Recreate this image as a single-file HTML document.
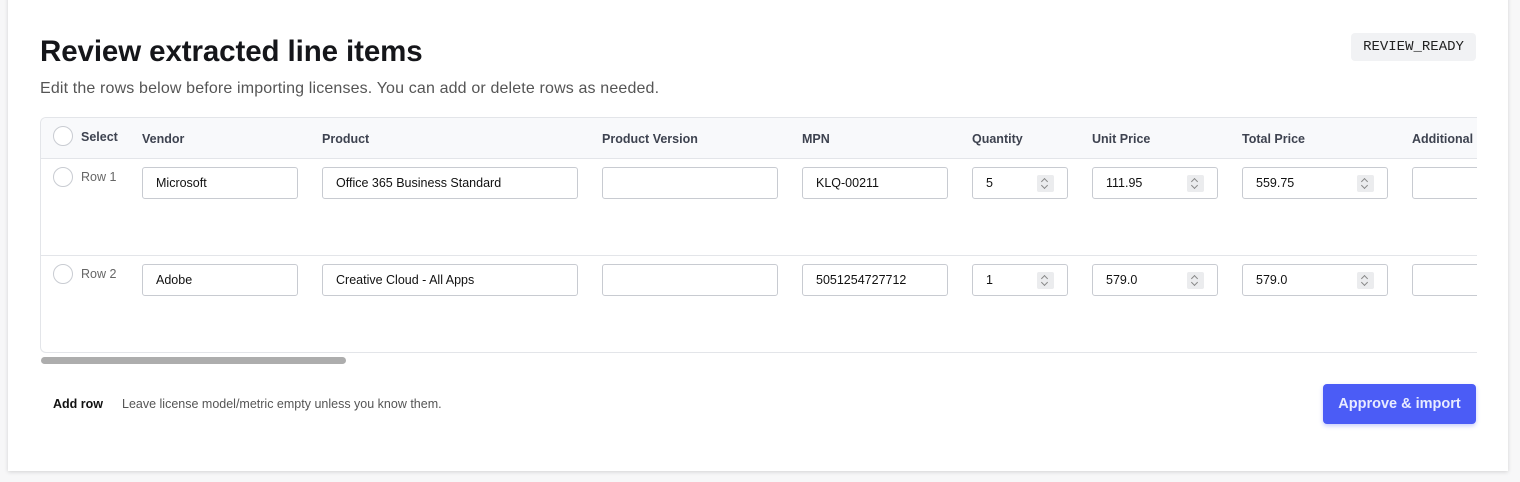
<!DOCTYPE html>
<html><head><meta charset="utf-8"><style>
*{box-sizing:border-box;margin:0;padding:0}
body{width:1520px;height:482px;background:#f7f7f8;font-family:"Liberation Sans",sans-serif;position:relative;overflow:hidden;color:#111}
.card{position:absolute;left:8px;top:-4px;width:1500px;height:475px;background:#fff;box-shadow:0 1px 4px rgba(0,0,0,.15)}
.a{position:absolute}
h1{position:absolute;left:40px;top:35px;font-size:29.5px;font-weight:700;color:#15161a;letter-spacing:-.1px}
.sub{left:40px;top:80px;font-size:16px;color:#555;letter-spacing:.15px}
.badge{left:1351px;top:33px;width:125px;height:28px;background:#f1f2f4;border-radius:4px;font-family:"Liberation Mono",monospace;font-size:14px;color:#222;text-align:center;line-height:28px}
.tbl{left:40px;top:117px;width:1437px;height:236px;border:1px solid #e3e5e9;border-right:none;border-radius:6px 0 0 6px;overflow:hidden}
.hdr{position:absolute;left:0;top:0;width:100%;height:41px;background:#f8f9fb;border-bottom:1px solid #e3e5e9}
.rowline{position:absolute;left:0;top:137px;width:100%;height:1px;background:#e3e5e9}
.th{position:absolute;top:14px;font-size:12.5px;font-weight:700;color:#3e4350}
.cb{position:absolute;width:20px;height:20px;border:1px solid #c9ccd2;border-radius:50%;background:#fff}
.rl{position:absolute;font-size:12.5px;color:#666}
.in{position:absolute;height:32px;border:1px solid #c8cbd1;border-radius:3px;background:#fff;font-size:12.5px;color:#111;line-height:30px;padding-left:13px}
.sp{position:absolute;top:7px;width:17px;height:17px;background:#ebecee;border-radius:2px}
.sp:before{content:"";position:absolute;left:5px;top:4px;width:4px;height:4px;border-left:1px solid #888;border-top:1px solid #888;transform:rotate(45deg)}
.sp:after{content:"";position:absolute;left:5px;top:8px;width:4px;height:4px;border-right:1px solid #888;border-bottom:1px solid #888;transform:rotate(45deg)}
.scroll{left:41px;top:357px;width:305px;height:7px;border-radius:4px;background:#adadad}
.add{left:53px;top:397px;font-size:12.5px;font-weight:700;color:#111}
.note{left:122px;top:397px;font-size:12.5px;color:#555}
.btn{left:1323px;top:384px;width:153px;height:40px;background:#4b5cf6;border-radius:4px;color:#e8ebff;font-size:14.5px;font-weight:700;text-align:center;line-height:40px;box-shadow:0 2px 4px rgba(75,92,246,.3)}
</style></head><body>
<div class="card"></div>
<h1>Review extracted line items</h1>
<div class="a sub">Edit the rows below before importing licenses. You can add or delete rows as needed.</div>
<div class="a badge">REVIEW_READY</div>
<div class="a tbl">
 <div class="hdr"></div>
 <div class="rowline"></div>
 <div class="cb" style="left:12px;top:8px"></div>
 <div class="th" style="left:40px;top:12px">Select</div>
 <div class="th" style="left:101px">Vendor</div>
 <div class="th" style="left:281px">Product</div>
 <div class="th" style="left:561px">Product Version</div>
 <div class="th" style="left:761px">MPN</div>
 <div class="th" style="left:931px">Quantity</div>
 <div class="th" style="left:1051px">Unit Price</div>
 <div class="th" style="left:1201px">Total Price</div>
 <div class="th" style="left:1371px">Additional</div>

 <div class="cb" style="left:12px;top:49px"></div>
 <div class="rl" style="left:40px;top:52px">Row 1</div>
 <div class="in" style="left:101px;top:49px;width:156px">Microsoft</div>
 <div class="in" style="left:281px;top:49px;width:256px">Office 365 Business Standard</div>
 <div class="in" style="left:561px;top:49px;width:176px"></div>
 <div class="in" style="left:761px;top:49px;width:146px">KLQ-00211</div>
 <div class="in" style="left:931px;top:49px;width:96px">5<div class="sp" style="left:64px"></div></div>
 <div class="in" style="left:1051px;top:49px;width:126px">111.95<div class="sp" style="left:94px"></div></div>
 <div class="in" style="left:1201px;top:49px;width:146px">559.75<div class="sp" style="left:114px"></div></div>
 <div class="in" style="left:1371px;top:49px;width:120px"></div>

 <div class="cb" style="left:12px;top:146px"></div>
 <div class="rl" style="left:40px;top:149px">Row 2</div>
 <div class="in" style="left:101px;top:146px;width:156px">Adobe</div>
 <div class="in" style="left:281px;top:146px;width:256px">Creative Cloud - All Apps</div>
 <div class="in" style="left:561px;top:146px;width:176px"></div>
 <div class="in" style="left:761px;top:146px;width:146px">5051254727712</div>
 <div class="in" style="left:931px;top:146px;width:96px">1<div class="sp" style="left:64px"></div></div>
 <div class="in" style="left:1051px;top:146px;width:126px">579.0<div class="sp" style="left:94px"></div></div>
 <div class="in" style="left:1201px;top:146px;width:146px">579.0<div class="sp" style="left:114px"></div></div>
 <div class="in" style="left:1371px;top:146px;width:120px"></div>
</div>
<div class="a scroll"></div>
<div class="a add">Add row</div>
<div class="a note">Leave license model/metric empty unless you know them.</div>
<div class="a btn">Approve &amp; import</div>
</body></html>
